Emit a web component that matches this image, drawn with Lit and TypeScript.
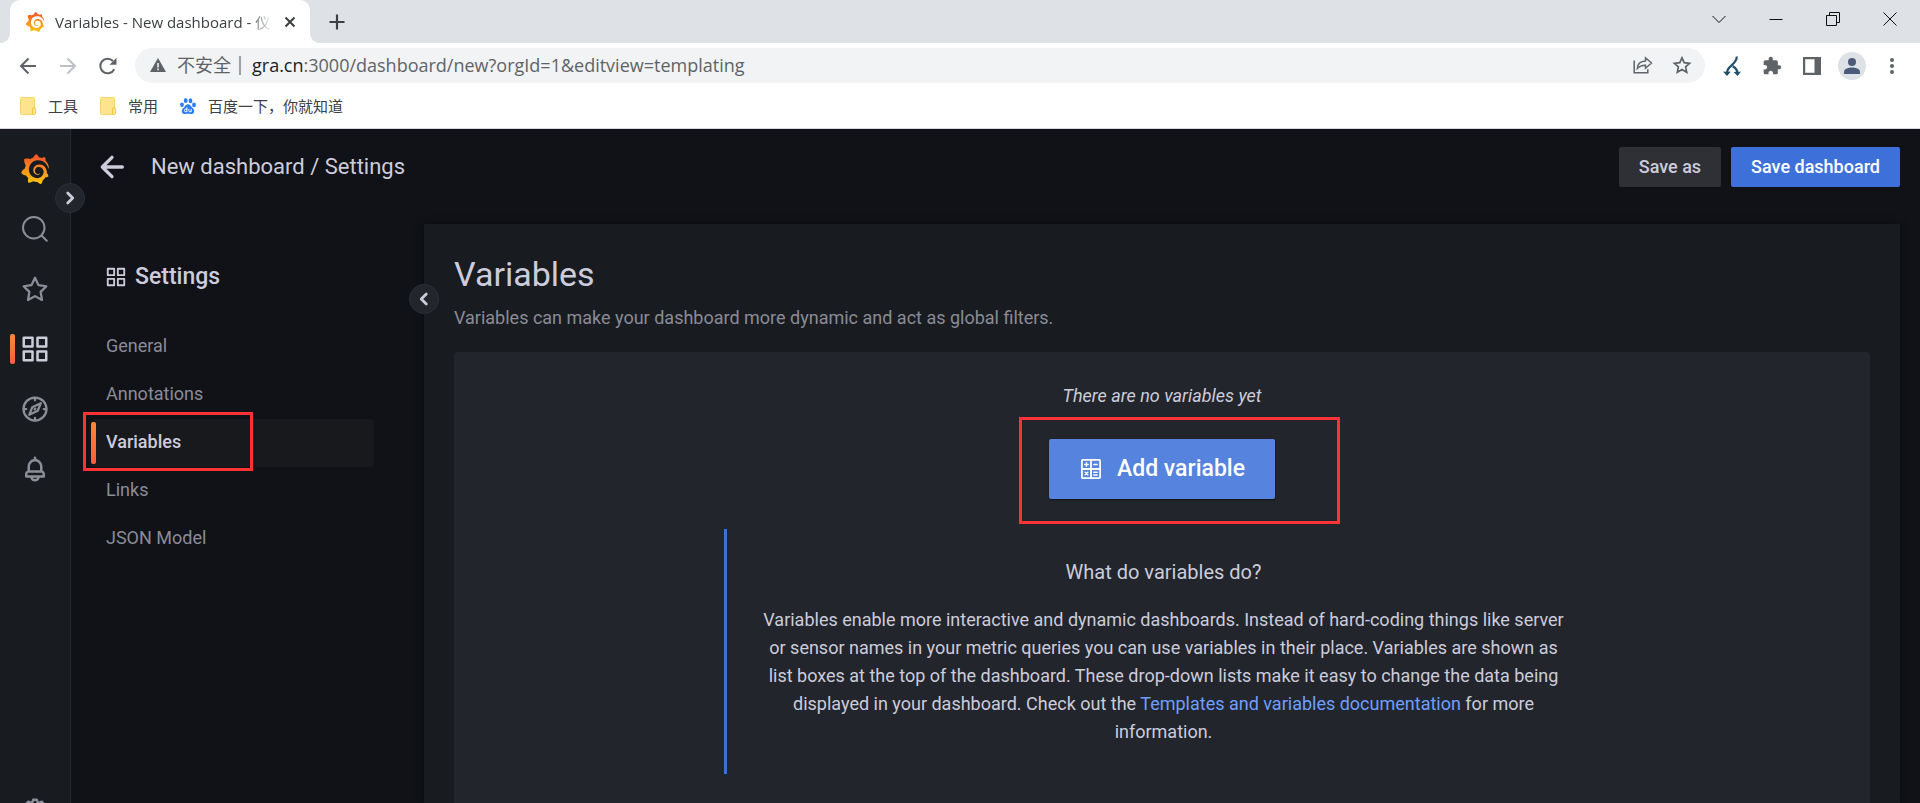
import { LitElement, html, css, svg, nothing } from "lit";
import { customElement, property } from "lit/decorators.js";
import { classMap } from "lit/directives/class-map.js";

const GRAFANA =
  "M23.02 10.59a8.578 8.578 0 0 0-.862-3.034 8.911 8.911 0 0 0-1.789-2.445c.337-1.342-.413-2.505-.413-2.505-1.292-.08-2.113.4-2.416.62-.052-.02-.102-.044-.154-.064-.22-.089-.446-.172-.677-.247-.231-.073-.47-.14-.711-.197a9.867 9.867 0 0 0-.875-.161C14.557.753 12.94 0 12.94 0c-1.804 1.145-2.147 2.744-2.147 2.744l-.018.093c-.098.029-.2.057-.298.088-.138.042-.275.094-.413.143-.138.055-.275.107-.41.166a8.869 8.869 0 0 0-1.557.87l-.063-.029c-2.497-.955-4.716.195-4.716.195-.203 2.658.996 4.33 1.235 4.636a11.608 11.608 0 0 0-.607 2.635C1.636 12.677.953 15.014.953 15.014c1.926 2.214 4.171 2.351 4.171 2.351.003-.002.006-.002.006-.005.285.509.615.994.986 1.446.156.19.32.371.488.548-.704 2.009.099 3.68.099 3.68 2.144.08 3.553-.937 3.849-1.173a9.784 9.784 0 0 0 3.164.501h.08l.055-.003.107-.002.103-.005.003.002c1.01 1.44 2.788 1.646 2.788 1.646 1.264-1.332 1.337-2.653 1.337-2.94v-.058c0-.02-.003-.039-.003-.06.265-.187.52-.387.758-.6a7.875 7.875 0 0 0 1.415-1.7c1.43.083 2.437-.885 2.437-.885-.236-1.49-1.085-2.216-1.264-2.354l-.018-.013-.016-.013a.217.217 0 0 1-.031-.02c.008-.092.016-.18.02-.27.011-.162.016-.323.016-.48v-.253l-.005-.098-.008-.135a1.891 1.891 0 0 0-.01-.13c-.003-.042-.008-.083-.013-.125l-.016-.124-.018-.122a6.215 6.215 0 0 0-2.032-3.73 6.015 6.015 0 0 0-3.222-1.46 6.292 6.292 0 0 0-.85-.048l-.107.002h-.063l-.044.003-.104.008a4.777 4.777 0 0 0-3.335 1.695c-.332.4-.592.84-.768 1.297a4.594 4.594 0 0 0-.312 1.817l.003.091c.005.055.007.11.013.164a3.615 3.615 0 0 0 .698 1.82 3.53 3.53 0 0 0 1.827 1.282c.33.098.66.14.971.137.039 0 .078 0 .114-.002l.063-.003c.02 0 .041-.003.062-.003.034-.002.065-.007.099-.01.007 0 .018-.003.028-.003l.031-.005.06-.008a1.18 1.18 0 0 0 .112-.02c.036-.008.072-.013.109-.024a2.634 2.634 0 0 0 .914-.415c.028-.02.056-.041.085-.065a.248.248 0 0 0 .039-.35.244.244 0 0 0-.309-.06l-.078.042c-.09.044-.184.083-.283.116a2.476 2.476 0 0 1-.475.096c-.028.003-.054.006-.083.006l-.083.002c-.026 0-.054 0-.08-.002l-.102-.006h-.012l-.024.006c-.016-.003-.031-.003-.044-.006-.031-.002-.06-.007-.091-.01a2.59 2.59 0 0 1-.724-.213 2.557 2.557 0 0 1-.667-.438 2.52 2.52 0 0 1-.805-1.475 2.306 2.306 0 0 1-.029-.444l.006-.122v-.023l.002-.031c.003-.021.003-.04.005-.06a3.163 3.163 0 0 1 1.352-2.29 3.12 3.12 0 0 1 .937-.43 2.946 2.946 0 0 1 .776-.101h.06l.07.002.045.003h.026l.07.005a4.041 4.041 0 0 1 1.635.49 3.94 3.94 0 0 1 1.602 1.662 3.77 3.77 0 0 1 .397 1.414l.005.076.003.075c.002.026.002.05.002.075 0 .024.003.052 0 .07v.065l-.002.073-.008.174a6.195 6.195 0 0 1-.08.639 5.1 5.1 0 0 1-.267.927 5.31 5.31 0 0 1-.624 1.13 5.052 5.052 0 0 1-3.237 2.014 4.82 4.82 0 0 1-.649.066l-.039.003h-.287a6.607 6.607 0 0 1-1.716-.265 6.776 6.776 0 0 1-3.4-2.274 6.75 6.75 0 0 1-.746-1.15 6.616 6.616 0 0 1-.714-2.596l-.005-.083-.002-.02v-.056l-.003-.073v-.096l-.003-.104v-.07l.003-.163c.008-.22.026-.45.054-.678a8.707 8.707 0 0 1 .28-1.355c.128-.444.286-.872.473-1.277a7.04 7.04 0 0 1 1.456-2.1 5.925 5.925 0 0 1 .953-.763c.169-.111.343-.213.524-.306.089-.05.182-.091.273-.135.047-.02.093-.042.138-.062a7.177 7.177 0 0 1 .714-.267l.145-.045c.049-.015.098-.026.148-.041.098-.029.197-.052.296-.076.049-.013.1-.02.15-.033l.15-.032.151-.028.076-.013.075-.01.153-.024c.057-.01.114-.013.171-.023l.169-.021c.036-.003.073-.008.106-.01l.073-.008.036-.003.042-.002c.057-.003.114-.008.171-.01l.086-.006h.023l.037-.003.145-.007a7.999 7.999 0 0 1 1.708.125 7.917 7.917 0 0 1 2.048.68 8.253 8.253 0 0 1 1.672 1.09l.09.077.089.078c.06.052.114.107.171.159.057.052.112.106.166.16.052.055.107.107.159.164a8.671 8.671 0 0 1 1.41 1.978c.012.026.028.052.04.078l.04.078.075.156c.023.051.05.1.07.153l.065.15a8.848 8.848 0 0 1 .45 1.34.19.19 0 0 0 .201.142.186.186 0 0 0 .172-.184c.01-.246.002-.532-.024-.856z";

const stroke = (width: number, body: unknown) =>
  svg`<g fill="none" stroke="currentColor" stroke-width=${width} stroke-linecap="round" stroke-linejoin="round">${body}</g>`;

const ICONS: Record<string, { box: string; body: unknown }> = {
  grafana: {
    box: "0 0 24 24",
    body: svg`<defs><linearGradient id="g" x1="0" y1="1" x2="0" y2="0">
      <stop offset="0" stop-color="#fcc60e"/><stop offset=".45" stop-color="#f79420"/><stop offset="1" stop-color="#f04e28"/>
      </linearGradient></defs><path fill="url(#g)" d=${GRAFANA} />`,
  },
  search: { box: "0 0 24 24", body: stroke(1.6, svg`<circle cx="11" cy="11" r="8.6"/><path d="M17.2 17.2 21.4 21.4"/>`) },
  star: {
    box: "0 0 24 24",
    body: stroke(1.8, svg`<path d="M12 3l2.8 5.9 6.3.9-4.6 4.5 1.1 6.5-5.6-3.1-5.6 3.1 1.1-6.5-4.6-4.5 6.3-.9z"/>`),
  },
  apps: {
    box: "0 0 24 24",
    body: svg`<path fill="currentColor" d="M10,13H3a1,1,0,0,0-1,1v7a1,1,0,0,0,1,1h7a1,1,0,0,0,1-1V14A1,1,0,0,0,10,13ZM9,20H4V15H9ZM21,2H14a1,1,0,0,0-1,1v7a1,1,0,0,0,1,1h7a1,1,0,0,0,1-1V3A1,1,0,0,0,21,2ZM20,9H15V4h5Zm1,4H14a1,1,0,0,0-1,1v7a1,1,0,0,0,1,1h7a1,1,0,0,0,1-1V14A1,1,0,0,0,21,13Zm-1,7H15V15h5ZM10,2H3A1,1,0,0,0,2,3v7a1,1,0,0,0,1,1h7a1,1,0,0,0,1-1V3A1,1,0,0,0,10,2ZM9,9H4V4H9Z"/>`,
  },
  compass: {
    box: "0 0 24 24",
    body: stroke(
      1.8,
      svg`<circle cx="12" cy="12" r="9.2"/><path d="M12 3v2M12 19v2M3 12h2M19 12h2"/><path d="M16.6 7.4 14.2 13.4 7.4 16.6 9.8 10.6z"/><path d="M11.7 12.3 12.3 11.7"/>`
    ),
  },
  bell: {
    box: "0 0 24 24",
    body: svg`<path fill="currentColor" d="M18,13.18V10a6,6,0,0,0-5-5.91V3a1,1,0,0,0-2,0V4.09A6,6,0,0,0,6,10v3.18A3,3,0,0,0,4,16v2a1,1,0,0,0,1,1H8.14a4,4,0,0,0,7.72,0H19a1,1,0,0,0,1-1V16A3,3,0,0,0,18,13.18ZM8,10a4,4,0,0,1,8,0v3H8Zm4,10a2,2,0,0,1-1.72-1h3.44A2,2,0,0,1,12,20Zm6-3H6V16a1,1,0,0,1,1-1H17a1,1,0,0,1,1,1Z"/>`,
  },
  cog: {
    box: "0 0 24 24",
    body: stroke(
      2,
      svg`<path d="M10.500 3h3l.9 2.900 2.900-1.300 2.100 2.100-1.300 2.900 2.900.9v3l-2.900.9 1.300 2.900-2.100 2.100-2.900-1.300-.9 2.900h-3l-.9-2.900-2.900 1.300-2.100-2.100 1.300-2.900L3 13.500v-3l2.900-.9-1.300-2.900 2.100-2.100 2.900 1.300z"/><circle cx="12" cy="12" r="3"/>`
    ),
  },
  right: { box: "0 0 24 24", body: stroke(3, svg`<path d="M9.500 6.500 15 12 9.500 17.500"/>`) },
  left: { box: "0 0 24 24", body: stroke(3, svg`<path d="M14.500 6.500 9 12 14.500 17.500"/>`) },
  back: { box: "0 0 24 24", body: stroke(2, svg`<path d="M18.200 12H6.200M12 6.200 6.200 12 12 17.800"/>`) },
  calculator: {
    box: "0 0 24 24",
    body: stroke(
      1.8,
      svg`<rect x="2.900" y="2.900" width="18.200" height="18.200" rx="1"/><path d="M12 3v18M3 12h18"/><path d="M7.500 5.800v3.400M5.800 7.500h3.400M14.800 7.500h3.400M6.200 15.200l2.600 2.600M8.800 15.200l-2.600 2.600M14.800 15.300h3.400M14.800 18h3.400" stroke-width="1.500"/>`
    ),
  },
  close: { box: "0 0 12 12", body: svg`<path d="M1.500 1.500 10.500 10.500M10.500 1.500 1.500 10.500" stroke="currentColor" stroke-width="2" fill="none"/>` },
  plus: { box: "0 0 16 16", body: svg`<path d="M8 .5v15M.5 8h15" stroke="currentColor" stroke-width="2.200" fill="none"/>` },
  chevron: { box: "0 0 14 14", body: svg`<path d="M.5 4 7 10.500 13.500 4" stroke="currentColor" fill="none"/>` },
  minimise: { box: "0 0 14 14", body: svg`<path d="M.5 7.500h13" stroke="currentColor" fill="none"/>` },
  restore: { box: "0 0 14 14", body: svg`<path d="M.5 3.500h10v10h-10zM3.500 3V.5h10v10H11" stroke="currentColor" fill="none"/>` },
  exit: { box: "0 0 14 14", body: svg`<path d="M.5.5l13 13M13.500.5l-13 13" stroke="currentColor" fill="none"/>` },
  prev: { box: "0 0 18 18", body: svg`<path d="M17 9H2M9.500 1.500 2 9l7.500 7.500" stroke="currentColor" stroke-width="2" fill="none"/>` },
  next: { box: "0 0 18 18", body: svg`<path d="M1 9h15M8.500 1.500 16 9l-7.500 7.500" stroke="currentColor" stroke-width="2" fill="none"/>` },
  reload: {
    box: "0 0 18 18",
    body: svg`<path d="M15.200 12.200A7.300 7.300 0 1 1 14 4" stroke="currentColor" stroke-width="2" fill="none"/><path fill="currentColor" d="M17.500.8v7h-7z"/>`,
  },
  warning: { box: "0 0 16 14", body: svg`<path fill="currentColor" d="M8 0l8 14H0z"/><path fill="#f1f3f4" d="M7.200 5h1.600v4.500H7.200zM7.200 10.600h1.600v1.600H7.200z"/>` },
  share: {
    box: "0 0 20 18",
    body: svg`<path fill="none" stroke="currentColor" stroke-width="1.500" d="M1.200 4.500v12.300h13.600v-3.600"/><path fill="none" stroke="currentColor" stroke-width="1.400" d="M4.300 12.500c.3-4.500 3-7.300 8.200-7.500V1.800l6 5.200-6 5.200V9.200c-3.600 0-6.200.9-8.200 3.300z"/>`,
  },
  pagestar: {
    box: "0 0 18 18",
    body: svg`<path fill="none" stroke="currentColor" stroke-width="1.700" d="M9 1.800l2.200 4.900 5.400.6-4 3.600 1.100 5.300L9 13.500l-4.700 2.700 1.100-5.300-4-3.600 5.400-.6z"/>`,
  },
  branch: {
    box: "0 0 18 20",
    body: svg`<path fill="none" stroke="currentColor" stroke-width="2.200" d="M13.600.5C14.500 6 8 9 5.500 12.500 4.300 14 4 15.500 3.800 17.500M9.800 10.300c2.600 1.500 4.600 4.200 4.900 7.200"/><path fill="currentColor" d="M0 15.500l2.500.3 2-.3 3.200.3-3.700 4.200zM10.600 16l2.500-.3 2.200.3 2.700-.5-3.400 4.500z"/>`,
  },
  puzzle: {
    box: "0 0 24 24",
    body: svg`<path fill="currentColor" d="M20.500 11H19V7c0-1.100-.9-2-2-2h-4V3.500C13 2.120 11.880 1 10.500 1S8 2.120 8 3.500V5H4c-1.100 0-1.990.9-1.990 2v3.800H3.500c1.490 0 2.700 1.210 2.700 2.700s-1.210 2.700-2.700 2.700H2V20c0 1.100.9 2 2 2h3.800v-1.500c0-1.490 1.210-2.700 2.700-2.700 1.490 0 2.700 1.210 2.700 2.700V22H17c1.100 0 2-.9 2-2v-4h1.500c1.380 0 2.500-1.120 2.500-2.500S21.880 11 20.500 11z"/>`,
  },
  panel: { box: "0 0 18 18", body: svg`<path fill="currentColor" fill-rule="evenodd" d="M0 0h18v18H0zM2.200 2.200v13.600h9.300V2.200z"/>` },
  person: {
    box: "0 0 28 28",
    body: svg`<circle cx="14" cy="14" r="14" fill="#dee1e6"/><circle cx="14" cy="10" r="4" fill="#4b5a78"/><path fill="#4b5a78" d="M6 22v-2.200c0-3 5-4.300 8-4.300s8 1.300 8 4.300V22z"/>`,
  },
  dots: { box: "0 0 4 16", body: svg`<g fill="currentColor"><circle cx="2" cy="2" r="2"/><circle cx="2" cy="8" r="2"/><circle cx="2" cy="14" r="2"/></g>` },
  folder: {
    box: "0 0 16 18",
    body: svg`<rect x=".5" y=".5" width="14" height="17" rx="1" fill="#ffe48f" stroke="#f5d667"/><path d="M12.500 17.500v-5.500a1.500 1.500 0 0 1 3 0v4a1.500 1.500 0 0 1-1.500 1.500z" fill="#ffe48f" stroke="#f0c94a"/>`,
  },
  baidu: {
    box: "0 0 16 16",
    body: svg`<g fill="#2c7df6"><ellipse cx="5.700" cy="2.600" rx="1.900" ry="2.500"/><ellipse cx="10.500" cy="2.700" rx="1.900" ry="2.500"/><ellipse cx="2" cy="6.800" rx="1.900" ry="2.300"/><ellipse cx="14" cy="6.900" rx="1.900" ry="2.300"/><path d="M8 6.300c2 0 2.700 1.900 4 3.100 1.300 1.100 2.500 2 2.200 4-.3 2-1.900 2.700-3.600 2.500-1.600-.2-3.600-.2-5.200 0-1.700.2-3.300-.5-3.600-2.500-.3-2 .9-2.900 2.200-4C5.300 8.200 6 6.300 8 6.300z"/></g><path fill="none" stroke="#fff" stroke-width="1" d="M6.900 9.300v4.400H5.700a1.200 1.200 0 0 1 0-2.600h1.200M8.800 11v1.700c0 .7.400 1 1 1h1.400V11"/>`,
  },
};

@customElement("ui-icon")
class UiIcon extends LitElement {
  @property() name = "";
  static styles = css`
    :host { display: block; flex: none; }
    .svg { display: block; width: 100%; height: 100%; overflow: visible; }
  `;
  render() {
    const icon = ICONS[this.name];
    return icon ? html`<svg class="svg" viewBox=${icon.box} aria-hidden="true">${icon.body}</svg>` : nothing;
  }
}

const reset = css`
  :host, * { box-sizing: border-box; }
  button, input { font: inherit; color: inherit; border: 0; padding: 0; margin: 0; background: none; }
  button { cursor: pointer; display: flex; align-items: center; justify-content: center; }
  a { color: inherit; text-decoration: none; }
  ul { list-style: none; margin: 0; padding: 0; }
  h1, h2, h3, p { margin: 0; font-weight: 400; }
`;

@customElement("browser-chrome")
class BrowserChrome extends LitElement {
  static styles = [
    reset,
    css`
      :host { display: block; flex: none; background: #fff; border-bottom: 1px solid #d9d6e2;
        font-family: "Open Sans", "Noto Sans CJK SC", sans-serif; color: #3c4043; }
      .strip { display: flex; align-items: stretch; height: 43px; background: #dee1e6; padding-left: 10px; }
      .tab { position: relative; display: flex; align-items: center; width: 300px; padding: 0 14px 0 15px;
        background: #fff; border-radius: 10px 10px 0 0; }
      .tab::before, .tab::after { content: ""; position: absolute; bottom: 0; width: 10px; height: 10px; }
      .tab::before { left: -10px; background: radial-gradient(circle at 0 0, transparent 10px, #fff 10px); }
      .tab::after { right: -10px; background: radial-gradient(circle at 100% 0, transparent 10px, #fff 10px); }
      .favicon { width: 20px; height: 20px; margin-right: 10px; }
      .title { flex: 1; min-width: 0; overflow: hidden; white-space: nowrap; font-size: 15px; line-height: 24px;
        mask-image: linear-gradient(to right, #000 calc(100% - 26px), transparent calc(100% - 4px)); }
      .x { width: 12px; height: 12px; margin-left: 8px; }
      .new { width: 54px; }
      .plus { width: 16px; height: 16px; }
      .window { display: flex; margin-left: auto; color: #111; padding: 0 2px 6px 0; }
      .window button { width: 57px; }
      .win { width: 14px; height: 14px; }
      .toolbar { display: flex; align-items: center; padding: 5px 0; color: #5f6368; }
      .nav { display: flex; padding-left: 8px; width: 135px; }
      .nav button { width: 40px; height: 35px; }
      .nav .off { color: #bdc1c6; }
      .i18 { width: 18px; height: 18px; }
      .omni { flex: 1; display: flex; align-items: center; height: 35px; border-radius: 18px; background: #f1f3f4;
        padding: 0 14px 1px 15px; font-size: 18px; line-height: 24px; }
      .warn { width: 16px; height: 14px; margin-right: 11px; }
      .unsafe { padding-right: 8px; border-right: 2px solid #9aa0a6; line-height: 19px; margin-right: 11px; }
      .host { color: #202124; }
      .url { flex: 1; min-width: 0; outline: none; }
      .omni button { margin-left: 20px; }
      .share { width: 20px; height: 18px; }
      .tools { display: flex; align-items: center; width: 215px; padding-left: 7px; }
      .tools button { width: 40px; height: 35px; }
      .tools .branch { width: 18px; height: 20px; color: #1f4e6b; }
      .tools .puzzle { width: 20px; height: 20px; }
      .tools .person { width: 28px; height: 28px; }
      .tools .dots { width: 4px; height: 16px; }
      .marks { display: flex; gap: 22px; height: 40px; padding: 0 20px 4px; align-items: center; font-size: 15px; line-height: 22px; }
      .mark { display: flex; align-items: center; gap: 12px; }
      .folder { width: 16px; height: 18px; }
      .paw { width: 16px; height: 16px; }
    `,
  ];
  render() {
    return html`
      <div class="strip">
        <div class="tab">
          <ui-icon class="favicon" name="grafana"></ui-icon>
          <span class="title">Variables - New dashboard - 仪</span>
          <button aria-label="Close tab"><ui-icon class="x" name="close"></ui-icon></button>
        </div>
        <button class="new" aria-label="New tab"><ui-icon class="plus" name="plus"></ui-icon></button>
        <div class="window">
          ${["chevron", "minimise", "restore", "exit"].map(
            (n) => html`<button aria-label=${n}><ui-icon class="win" name=${n}></ui-icon></button>`
          )}
        </div>
      </div>
      <div class="toolbar">
        <div class="nav">
          <button aria-label="Back"><ui-icon class="i18" name="prev"></ui-icon></button>
          <button class="off" aria-label="Forward"><ui-icon class="i18" name="next"></ui-icon></button>
          <button aria-label="Reload"><ui-icon class="i18" name="reload"></ui-icon></button>
        </div>
        <div class="omni">
          <ui-icon class="warn" name="warning"></ui-icon>
          <span class="unsafe">不安全</span>
          <label class="host" for="url">gra.cn</label>
          <input class="url" id="url" value=":3000/dashboard/new?orgId=1&amp;editview=templating" />
          <button aria-label="Share"><ui-icon class="share" name="share"></ui-icon></button>
          <button aria-label="Bookmark"><ui-icon class="i18" name="pagestar"></ui-icon></button>
        </div>
        <div class="tools">
          <button aria-label="Extension"><ui-icon class="branch" name="branch"></ui-icon></button>
          <button aria-label="Extensions"><ui-icon class="puzzle" name="puzzle"></ui-icon></button>
          <button aria-label="Side panel"><ui-icon class="i18" name="panel"></ui-icon></button>
          <button aria-label="Profile"><ui-icon class="person" name="person"></ui-icon></button>
          <button aria-label="Menu"><ui-icon class="dots" name="dots"></ui-icon></button>
        </div>
      </div>
      <div class="marks">
        <a class="mark" href="#"><ui-icon class="folder" name="folder"></ui-icon>工具</a>
        <a class="mark" href="#"><ui-icon class="folder" name="folder"></ui-icon>常用</a>
        <a class="mark" href="#"><ui-icon class="paw" name="baidu"></ui-icon>百度一下，你就知道</a>
      </div>
    `;
  }
}

@customElement("side-menu")
class SideMenu extends LitElement {
  static styles = [
    reset,
    css`
      :host { display: block; position: relative; flex: none; width: 71px; background: #181b1f;
        border-right: 1px solid #27292f; color: #8e8e9a; z-index: 2; }
      .menu { display: flex; flex-direction: column; height: 100%; padding-top: 10px; }
      .item { display: flex; align-items: center; justify-content: center; height: 60px; position: relative; }
      .icon { width: 30px; height: 30px; }
      .on { color: #ccccdc; }
      .on::before { content: ""; position: absolute; left: 10px; top: 15px; width: 5px; height: 30px;
        border-radius: 2px; background: linear-gradient(#ff8833, #f55f3e); }
      .last { margin-top: 282px; }
      .toggle { position: absolute; right: -15px; top: 54px; width: 30px; height: 30px; border-radius: 50%;
        background: #22252b; border: 1px solid #2d2f36; color: #ccccdc; }
      .arrow { width: 22px; height: 22px; }
    `,
  ];
  render() {
    const items = ["grafana", "search", "star", "apps", "compass", "bell"];
    return html`
      <nav aria-label="Main">
        <ul class="menu">
          ${items.map(
            (n) => html`<li>
              <a class=${classMap({ item: true, on: n === "apps" })} href="#" aria-label=${n}><ui-icon class="icon" name=${n}></ui-icon></a>
            </li>`
          )}
          <li class="last"><a class="item" href="#" aria-label="Configuration"><ui-icon class="icon" name="cog"></ui-icon></a></li>
        </ul>
      </nav>
      <button class="toggle" aria-label="Expand menu"><ui-icon class="arrow" name="right"></ui-icon></button>
    `;
  }
}

@customElement("dashboard-settings")
class DashboardSettings extends LitElement {
  static styles = [
    reset,
    css`
      :host { display: flex; flex-direction: column; flex: 1; min-width: 0; font-size: 18px; line-height: 24px; color: #ccccdc; }
      .top { display: flex; align-items: center; height: 95px; padding: 0 20px 20px; flex: none; }
      .back { width: 42px; height: 40px; margin-right: 18px; }
      .backicon { width: 40px; height: 40px; }
      .crumb { font-size: 22px; line-height: 30px; margin-right: auto; }
      .btn { height: 40px; padding: 0 20px; border-radius: 2px; font-weight: 500; background: #2f3036; white-space: nowrap; }
      .primary { background: #3d71d9; color: #fff; margin-left: 10px; }
      .body { display: flex; flex: 1; min-height: 0; padding-right: 20px; }
      .side { width: 353px; flex: none; padding: 38px 50px 0 20px; }
      .heading { display: flex; align-items: center; gap: 8px; padding-left: 14px; font-size: 23px; font-weight: 500; line-height: 30px; margin-bottom: 31px; }
      .grid { width: 22px; height: 22px; }
      .tabs { display: flex; flex-direction: column; }
      .tab { position: relative; display: flex; align-items: center; height: 48px; padding: 0 0 2px 15px; color: #8b8b97; border-radius: 4px; }
      .on { background: #18191d; color: #ccccdc; font-weight: 500; }
      .on::before { content: ""; position: absolute; left: 0; top: 3px; bottom: 3px; width: 5px; border-radius: 2px;
        background: linear-gradient(#ff8833, #f55f3e); }
      .mark { position: absolute; border: 3px solid #ff3333; pointer-events: none; }
      .marktab { left: -8px; top: -7px; width: 170px; height: 59px; z-index: 1; }
      .panel { position: relative; flex: 1; min-width: 0; padding: 30px; background: #181b1f; box-shadow: 0 0 8px rgba(0, 0, 0, 0.4); }
      .fold { position: absolute; left: -15px; top: 60px; width: 30px; height: 30px; border-radius: 50%;
        background: #22252b; border: 1px solid #2d2f36; }
      .arrow { width: 22px; height: 22px; }
      .title { font-size: 34px; line-height: 40px; margin-bottom: 12px; }
      .sub { color: #8b8b97; margin-bottom: 22px; }
      .card { display: flex; flex-direction: column; align-items: center; background: #22252b; border-radius: 4px; padding: 32px 30px 60px; text-align: center; }
      .none { font-style: italic; margin-bottom: 31px; }
      .cta { position: relative; margin-bottom: 30px; }
      .add { height: 60px; padding: 0 30px; gap: 14px; border-radius: 2px; background: #5683dd; color: #fff; font-size: 23px; font-weight: 500;
        box-shadow: 0 1px 2px rgba(0, 0, 0, 0.5); }
      .calc { width: 24px; height: 24px; }
      .markadd { left: -30px; right: -65px; top: -22px; bottom: -25px; }
      .info { width: 100%; max-width: 876px; border-left: 3px solid #3d71d9; padding: 29px 32px 28px; }
      .what { font-size: 20px; line-height: 28px; margin-bottom: 20px; }
      .text { line-height: 28px; }
      .link { color: #6e9fff; }
    `,
  ];
  render() {
    const tabs = ["General", "Annotations", "Variables", "Links", "JSON Model"];
    return html`
      <header class="top">
        <button class="back" aria-label="Go back"><ui-icon class="backicon" name="back"></ui-icon></button>
        <h1 class="crumb">New dashboard / Settings</h1>
        <button class="btn">Save as</button>
        <button class="btn primary">Save dashboard</button>
      </header>
      <div class="body">
        <aside class="side">
          <h2 class="heading"><ui-icon class="grid" name="apps"></ui-icon>Settings</h2>
          <nav class="tabs" aria-label="Settings">
            ${tabs.map((t) => {
              const on = t === "Variables";
              return html`<a class=${classMap({ tab: true, on })} href="#">${t}${on ? html`<span class="mark marktab"></span>` : nothing}</a>`;
            })}
          </nav>
        </aside>
        <main class="panel">
          <h2 class="title">Variables</h2>
          <p class="sub">Variables can make your dashboard more dynamic and act as global filters.</p>
          <section class="card">
            <p class="none">There are no variables yet</p>
            <div class="cta">
              <button class="add"><ui-icon class="calc" name="calculator"></ui-icon>Add variable</button>
              <span class="mark markadd"></span>
            </div>
            <div class="info">
              <h3 class="what">What do variables do?</h3>
              <p class="text">
                Variables enable more interactive and dynamic dashboards. Instead of hard-coding things like server or sensor
                names in your metric queries you can use variables in their place. Variables are shown as list boxes at the top
                of the dashboard. These drop-down lists make it easy to change the data being displayed in your dashboard. Check
                out the <a class="link" href="#">Templates and variables documentation</a> for more information.
              </p>
            </div>
          </section>
          <button class="fold" aria-label="Collapse settings"><ui-icon class="arrow" name="left"></ui-icon></button>
        </main>
      </div>
    `;
  }
}

@customElement("app-root")
class AppRoot extends LitElement {
  static styles = css`
    :host { display: flex; flex-direction: column; height: 100vh; overflow: hidden; background: #111217; font-family: Roboto, sans-serif; }
    .app { display: flex; flex: 1; min-height: 0; }
  `;
  render() {
    return html`
      <browser-chrome></browser-chrome>
      <div class="app">
        <side-menu></side-menu>
        <dashboard-settings></dashboard-settings>
      </div>
    `;
  }
}
